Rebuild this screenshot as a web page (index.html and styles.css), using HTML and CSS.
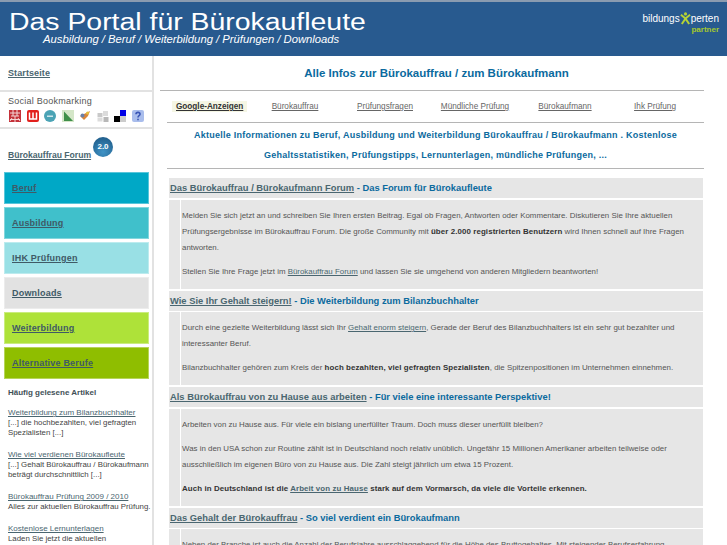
FILE: index.html
```html
<!DOCTYPE html>
<html lang="de">
<head>
    <meta charset="UTF-8">
    <title>Das Portal für Bürokaufleute</title>
    <link rel="stylesheet" href="styles.css">
</head>
<body>
    <header class="top">
        <div class="top-text">
            <div class="top-title">Das Portal für Bürokaufleute</div>
            <div class="top-sub">Ausbildung / Beruf / Weiterbildung / Prüfungen / Downloads</div>
        </div>
        <div class="partner">
            <div class="partner-name">bildungs<svg class="partner-x" viewBox="0 0 12 14" width="11" height="13"><circle cx="6" cy="2" r="1.7" fill="#b5d334"/><path d="M1 3 L6 7 L11 3 M6 7 L2 13 M6 7 L10 13" stroke="#b5d334" stroke-width="2.2" fill="none"/></svg>perten</div>
            <div class="partner-tag">partner</div>
        </div>
    </header>
    <div class="page">
        <aside class="side">
            <div class="side-box side-home"><a href="#" class="strong-link">Startseite</a></div>
            <div class="side-box side-social">
                <div class="social-title">Social Bookmarking</div>
                <div class="social-icons">
                    <svg width="12" height="12" viewBox="0 0 12 12"><rect width="12" height="12" fill="#c4323a"/><path d="M1 3H11M2 6H10M1 9.5H11M4 0V6M8 0V6M6 6V12M3 8L1 11M9 8L11 11" stroke="#f3d5d5" stroke-width="1" fill="none"/></svg>
                    <svg width="12" height="12" viewBox="0 0 12 12"><rect width="12" height="12" rx="2" fill="#e2201c"/><path d="M2.5 2.5V9H9.5V2.5M6 2.5V9" stroke="#fff" stroke-width="1.5" fill="none"/></svg>
                    <svg width="12" height="12" viewBox="0 0 12 12"><circle cx="6" cy="6" r="6" fill="#4ba3b5"/><rect x="3" y="5.5" width="6" height="1.5" fill="#cfe6ea"/></svg>
                    <svg width="12" height="12" viewBox="0 0 12 12"><rect width="12" height="12" fill="#d4e6c8"/><path d="M2 1.5 L11 11 H2 Z" fill="#3f8f4a"/></svg>
                    <svg width="12" height="12" viewBox="0 0 12 12"><path d="M1 6 L7 3 L11 1 L9 6 L5 10 Z" fill="#d9853a"/><circle cx="3.5" cy="5.5" r="2" fill="#6a7fa8"/><circle cx="8.5" cy="3" r="1.5" fill="#e5c23a"/></svg>
                    <svg width="12" height="12" viewBox="0 0 12 12"><rect x="0.5" y="3" width="5" height="4" fill="#c9c9c9"/><rect x="6" y="1" width="5" height="5" fill="#dcdcdc"/><rect x="0.5" y="7.5" width="5" height="4" fill="#dcdcdc"/><rect x="6.5" y="7" width="5" height="5" fill="#b8b8b8"/></svg>
                    <svg width="12" height="12" viewBox="0 0 12 12"><rect x="6" width="6" height="6" fill="#0000e6"/><rect y="6" width="6" height="6" fill="#000"/><rect x="6" y="6" width="6" height="6" fill="#ccc"/></svg>
                    <svg width="12" height="12" viewBox="0 0 12 12"><rect width="12" height="12" rx="2" fill="#a9bdec"/><path d="M4 4.2C4 1.8 8 1.8 8 4.2C8 5.7 6 5.7 6 7.5M6 8.7V10.3" stroke="#3a55b5" stroke-width="1.6" fill="none"/></svg>
                </div>
            </div>
            <div class="side-forum">
                <a href="#" class="strong-link forum-link">Bürokauffrau Forum</a>
                <span class="badge">2.0</span>
            </div>
            <nav class="side-nav">
                <a href="#" class="nav-item nav-beruf">Beruf</a>
                <a href="#" class="nav-item nav-ausbildung">Ausbildung</a>
                <a href="#" class="nav-item nav-ihk">IHK Prüfungen</a>
                <a href="#" class="nav-item nav-downloads">Downloads</a>
                <a href="#" class="nav-item nav-weiter">Weiterbildung</a>
                <a href="#" class="nav-item nav-alt">Alternative Berufe</a>
            </nav>
            <div class="articles">
                <div class="articles-title">Häufig gelesene Artikel</div>
                <div class="article"><a href="#">Weiterbildung zum Bilanzbuchhalter </a><br>[...] die hochbezahlten, viel gefragten Spezialisten [...]</div>
                <div class="article"><a href="#">Wie viel verdienen Bürokaufleute </a><br>[...] Gehalt Bürokauffrau / Bürokaufmann beträgt durchschnittlich [...]</div>
                <div class="article"><a href="#">Bürokauffrau Prüfung 2009 / 2010 </a><br>Alles zur aktuellen Bürokauffrau Prüfung.</div>
                <div class="article"><a href="#">Kostenlose Lernunterlagen </a><br>Laden Sie jetzt die aktuellen Lernunterlagen kostenlos herunter!</div>
            </div>
        </aside>
        <main class="main">
            <h1 class="main-title">Alle Infos zur Bürokauffrau / zum Bürokaufmann</h1>
            <div class="ads">
                <span class="ads-label">Google-Anzeigen</span>
                <a href="#">Bürokauffrau</a>
                <a href="#">Prüfungsfragen</a>
                <a href="#">Mündliche Prüfung</a>
                <a href="#">Bürokaufmann</a>
                <a href="#">Ihk Prüfung</a>
            </div>
            <p class="intro">Aktuelle Informationen zu Beruf, Ausbildung und Weiterbildung Bürokauffrau / Bürokaufmann . Kostenlose Gehaltsstatistiken, Prüfungstipps, Lernunterlagen, mündliche Prüfungen, ...</p>

            <h2 class="sec-head"><a href="#">Das Bürokauffrau / Bürokaufmann Forum</a> - Das Forum für Bürokaufleute</h2>
            <div class="sec-body">
                <p>Melden Sie sich jetzt an und schreiben Sie Ihren ersten Beitrag. Egal ob Fragen, Antworten oder Kommentare. Diskutieren Sie Ihre aktuellen Prüfungsergebnisse im Bürokauffrau Forum. Die große Community mit <b>über 2.000 registrierten Benutzern</b> wird Ihnen schnell auf Ihre Fragen antworten.</p>
                <p>Stellen Sie Ihre Frage jetzt im <a href="#">Bürokauffrau Forum</a> und lassen Sie sie umgehend von anderen Mitgliedern beantworten!</p>
            </div>

            <h2 class="sec-head"><a href="#">Wie Sie Ihr Gehalt steigern!</a> - Die Weiterbildung zum Bilanzbuchhalter</h2>
            <div class="sec-body">
                <p>Durch eine gezielte Weiterbildung lässt sich Ihr <a href="#">Gehalt enorm steigern</a>, Gerade der Beruf des Bilanzbuchhalters ist ein sehr gut bezahlter und interessanter Beruf.</p>
                <p>Bilanzbuchhalter gehören zum Kreis der <b>hoch bezahlten, viel gefragten Spezialisten</b>, die Spitzenpositionen im Unternehmen einnehmen.</p>
            </div>

            <h2 class="sec-head"><a href="#">Als Bürokauffrau von zu Hause aus arbeiten</a> - Für viele eine interessante Perspektive!</h2>
            <div class="sec-body">
                <p>Arbeiten von zu Hause aus. Für viele ein bislang unerfüllter Traum. Doch muss dieser unerfüllt bleiben?</p>
                <p>Was in den USA schon zur Routine zählt ist in Deutschland noch relativ unüblich. Ungefähr 15 Millionen Amerikaner arbeiten teilweise oder ausschließlich im eigenen Büro von zu Hause aus. Die Zahl steigt jährlich um etwa 15 Prozent.</p>
                <p><b>Auch in Deutschland ist die <a href="#">Arbeit von zu Hause</a> stark auf dem Vormarsch, da viele die Vorteile erkennen.</b></p>
            </div>

            <h2 class="sec-head"><a href="#">Das Gehalt der Bürokauffrau</a> - So viel verdient ein Bürokaufmann</h2>
            <div class="sec-body">
                <p>Neben der Branche ist auch die Anzahl der Berufsjahre ausschlaggebend für die Höhe des Bruttogehaltes. Mit steigender Berufserfahrung</p>
            </div>
        </main>
    </div>
</body>
</html>
```

FILE: styles.css
```css
html, body {
    margin: 0;
    padding: 0;
    height: 545px;
    overflow: hidden;
}
body {
    font-family: "Liberation Sans", Arial, sans-serif;
    font-size: 9px;
    color: #444;
    background-color: #fff;
}
a {
    color: #4a6670;
}
p {
    margin: 0;
}

/* header */
.top {
    height: 54px;
    border-top: 2px solid #8a9bb0;
    background-color: #285a8f;
    color: #fff;
    display: flex;
    justify-content: space-between;
}
.top-text {
    padding-left: 9px;
}
.top-title {
    font-size: 23px;
    line-height: 24px;
    margin-top: 8px;
    transform: scaleX(1.235);
    transform-origin: left center;
}
.top-sub {
    font-size: 11.25px;
    font-style: italic;
    line-height: 14px;
    margin-left: 34px;
    margin-top: -2px;
}
.partner {
    padding: 10px 8px 0 0;
    text-align: right;
    font-size: 10px;
}
.partner-name {
    line-height: 13px;
}
.partner-x {
    vertical-align: -3px;
}
.partner-tag {
    color: #a5c82d;
    font-size: 8px;
    font-weight: bold;
    line-height: 9px;
}

/* sidebar */
.page {
    display: flex;
    height: 489px;
    overflow: hidden;
}
.side {
    width: 152px;
    flex: none;
    border-right: 2px solid #e2e2e2;
}
.side-box {
    border-bottom: 2px solid #e2e2e2;
    padding-left: 8px;
}
.strong-link {
    font-weight: bold;
    font-size: 9px;
    letter-spacing: 0.1px;
}
.side-home {
    height: 34px;
    line-height: 34px;
}
.side-social {
    height: 35px;
}
.social-title {
    font-size: 9px;
    letter-spacing: 0.25px;
    color: #555;
    padding-top: 3px;
    line-height: 12px;
}
.social-icons {
    display: flex;
    gap: 5.5px;
    padding: 3px 0 0 1px;
}
.side-forum {
    height: 43px;
    padding: 21px 0 0 8px;
    box-sizing: border-box;
    position: relative;
}
.forum-link {
    font-size: 8.6px;
    letter-spacing: 0;
}
.badge {
    position: absolute;
    left: 93px;
    top: 8px;
    width: 20px;
    height: 20px;
    border-radius: 50%;
    background: radial-gradient(circle at 50% 75%, #3f93c6, #1b5480);
    color: #fff;
    font-size: 8px;
    font-weight: bold;
    text-align: center;
    line-height: 20px;
}
.side-nav {
    display: flex;
    flex-direction: column;
    gap: 3px;
    padding: 0 3px 0 4px;
}
.nav-item {
    display: block;
    height: 30px;
    line-height: 30px;
    padding-left: 7px;
    font-size: 9px;
    font-weight: bold;
    letter-spacing: 0.2px;
    color: #3f5a66;
    border: 1px solid rgba(255, 255, 255, 0.35);
}
.nav-beruf { background-color: #00a8c6; }
.nav-ausbildung { background-color: #40c0cb; }
.nav-ihk { background-color: #99e0e5; }
.nav-downloads { background-color: #e2e2e2; }
.nav-weiter { background-color: #aee239; }
.nav-alt { background-color: #8fbe00; }
.articles {
    padding: 9px 0 0 8px;
}
.articles-title {
    font-weight: bold;
    font-size: 8px;
    line-height: 10px;
    color: #3f5057;
    margin-bottom: 10px;
}
.article {
    font-size: 7.85px;
    line-height: 10px;
    margin-bottom: 12px;
}
.article a {
    font-size: 8px;
}

/* main column */
.main {
    width: 537px;
    margin-left: 13px;
    flex: none;
}
.main-title {
    margin: 0 0 0 -7px;
    padding-left: 9px;
    height: 34px;
    line-height: 34px;
    font-size: 11.5px;
    color: #0b6a9e;
    text-align: center;
    border-bottom: 1px solid #b5b5b5;
}
.ads {
    display: grid;
    grid-template-columns: 83px repeat(5, 90px);
    align-items: center;
    justify-items: center;
    height: 31px;
    border-bottom: 1px solid #b5b5b5;
    font-size: 8.2px;
}
.ads-label {
    justify-self: start;
    margin-left: 5px;
    background-color: #f5f6e4;
    font-weight: bold;
    color: #333;
    text-decoration: underline;
    padding: 1px 4px;
    white-space: nowrap;
}
.ads a {
    color: #666;
}
.intro {
    border-bottom: 1px solid #b5b5b5;
    padding: 2px 14px 0;
    height: 43px;
    margin-bottom: 9px;
    font-size: 9px;
    line-height: 20px;
    font-weight: bold;
    letter-spacing: 0.25px;
    color: #0b6a9e;
    text-align: center;
}
.sec-head {
    margin: 0 1px 1.5px 2px;
    font-size: 9.37px;
    line-height: 20px;
    height: 20px;
    background-color: #e6e6e6;
    color: #0b6a9e;
    padding-left: 1px;
}
.sec-body {
    margin: 0 1px 2px 2px;
    background-color: #e6e6e6;
    border-left: 11px solid #e6e6e6;
    padding: 8px 8px 1px 2px;
    font-size: 7.9px;
    line-height: 16px;
    color: #555;
    position: relative;
}
.sec-body::before {
    content: "";
    position: absolute;
    left: 0;
    top: 0;
    bottom: 0;
    width: 1px;
    background-color: #fff;
}
.sec-body p {
    margin-bottom: 8px;
}
.sec-body b {
    color: #333;
    letter-spacing: 0.1px;
}
```
